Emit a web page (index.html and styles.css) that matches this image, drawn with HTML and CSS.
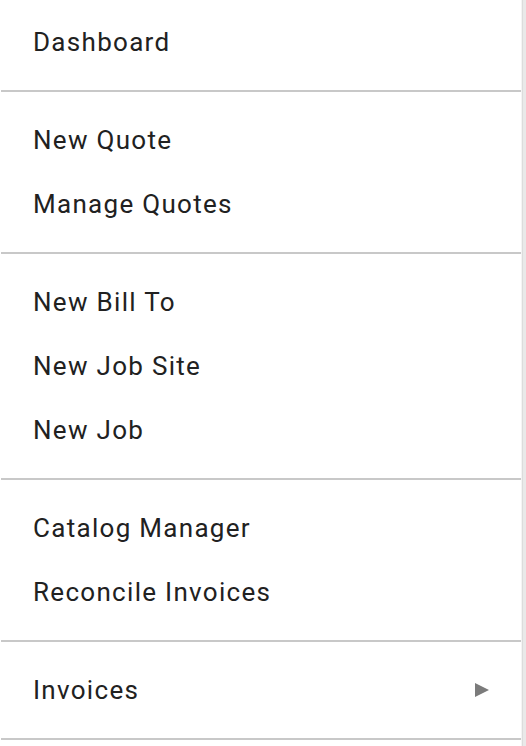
FILE: index.html
```html
<!DOCTYPE html>
<html lang="en">
<head>
  <meta charset="UTF-8">
  <meta name="viewport" content="width=device-width, initial-scale=1.0">
  <title>Menu</title>
  <link rel="stylesheet" href="styles.css">
</head>
<body>
  <div class="page">
    <nav class="menu">
      <div class="menu-section first">
        <div class="menu-item">Dashboard</div>
      </div>
      <div class="menu-section">
        <div class="menu-item">New Quote</div>
        <div class="menu-item">Manage Quotes</div>
      </div>
      <div class="menu-section">
        <div class="menu-item">New Bill To</div>
        <div class="menu-item">New Job Site</div>
        <div class="menu-item">New Job</div>
      </div>
      <div class="menu-section">
        <div class="menu-item">Catalog Manager</div>
        <div class="menu-item">Reconcile Invoices</div>
      </div>
      <div class="menu-section">
        <div class="menu-item has-sub">
          <span>Invoices</span>
          <svg class="arrow" width="14" height="14" viewBox="0 0 14 14"><polygon points="0,0 14,7 0,14" fill="#7b7b7b"/></svg>
        </div>
      </div>
      <div class="menu-section last"></div>
    </nav>
    <div class="behind"></div>
  </div>
</body>
</html>
```

FILE: styles.css
```css
body {
  margin: 0;
  background: #e9e9e9;
  font-family: Roboto, "Liberation Sans", sans-serif;
  color: #212121;
}
.page {
  display: flex;
  height: 746px;
  overflow: hidden;
}
.menu {
  width: 521px;
  background: #fff;
  border-right: 1px solid #f4f4f4;
  flex-shrink: 0;
}
.menu-section {
  padding: 16px 0;
  border-top: 2px solid #c8c8c8;
  margin-left: 1px;
}
.menu-section.first {
  border-top: none;
  padding-top: 10px;
}
.menu-section.last {
  padding: 0;
  height: 6px;
}
.menu-item {
  height: 64px;
  display: flex;
  align-items: center;
  justify-content: space-between;
  padding: 0 32px 0 32px;
  font-size: 26px;
  letter-spacing: 1.3px;
}
.has-sub .arrow {
  margin-right: 0;
}
.behind {
  flex: 1;
  background: #e9e9e9;
  border-left: 1px solid #dcdcdc;
}
```
